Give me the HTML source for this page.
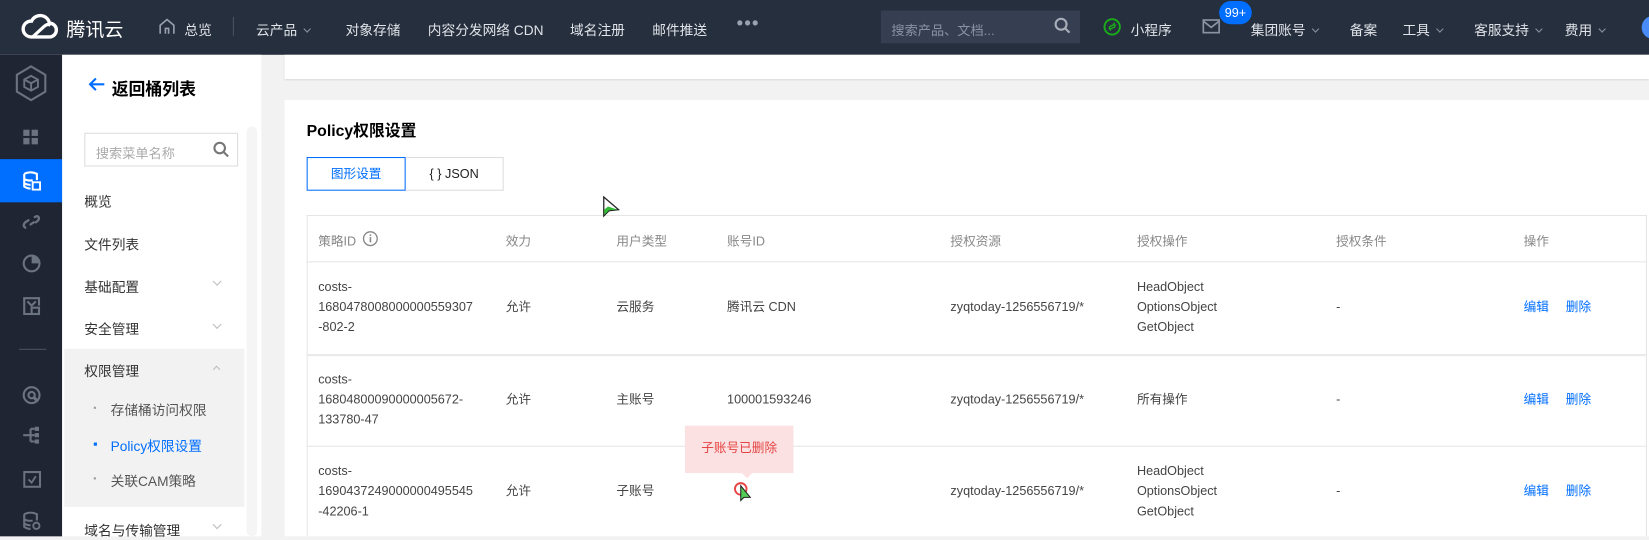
<!DOCTYPE html>
<html><head><meta charset="utf-8"><style>
*{margin:0;padding:0;box-sizing:border-box}
html,body{width:1649px;height:536px;overflow:hidden;background:#f2f2f2}
#w{position:absolute;left:0;top:0;width:1565px;height:509px;transform:scale(1.0537);transform-origin:0 0;font-family:"Liberation Sans","Noto Sans CJK SC",sans-serif;color:#444;font-size:12px}
.a{position:absolute;white-space:nowrap}
.hd{left:0;top:0;width:1565px;height:52px;background:#262f3e}
.hd .t{color:#e0e3e8;font-size:13px;top:18px}
.chev{display:inline-block;width:5px;height:5px;border-right:1px solid #8a93a3;border-bottom:1px solid #8a93a3;transform:rotate(45deg);margin-left:7px;vertical-align:3px}
.lb{left:0;top:52px;width:59px;height:457px;background:#1f2532}
.sb{left:59px;top:52px;width:189px;height:457px;background:#fff}
.mi{left:80px;font-size:13px;color:#333}
.sc{left:203px;font-size:0}
.sc:after{content:"";position:absolute;width:5px;height:5px;border-right:1px solid #bbb;border-bottom:1px solid #bbb;transform:rotate(45deg)}
.th{color:#888;top:220px}
.cell{line-height:19px;font-size:12px;color:#444}
.hl{position:absolute;left:291px;width:1271px;height:1px;background:#e5e5e5}
.ed{color:#006eff}
</style></head><body><div id="w">
<div class="a hd">
<svg class="a" style="left:20px;top:12px" width="36" height="26" viewBox="0 0 36 26"><path d="M9 23 H27 A6.5 6.5 0 0 0 27 10 A9 9 0 0 0 10 8 A7.5 7.5 0 0 0 9 23 Z" fill="none" stroke="#fff" stroke-width="3.2"/><path d="M11 23 L22 13 Q25 10 28 12" fill="none" stroke="#fff" stroke-width="3"/></svg>
<div class="a" style="left:63px;top:14px;color:#fff;font-size:18px">腾讯云</div>
<svg class="a" style="left:150px;top:17px" width="17" height="16" viewBox="0 0 17 16"><path d="M2 15 V7 L8.5 1.5 L15 7 V15 M7 15 V10 H10 V15" fill="none" stroke="#9aa2b1" stroke-width="1.5"/></svg>
<div class="a t" style="left:175px">总览</div>
<div class="a" style="left:221px;top:16px;width:1px;height:18px;background:#4a5366"></div>
<div class="a t" style="left:243px">云产品<span class="chev"></span></div>
<div class="a t" style="left:328px">对象存储</div>
<div class="a t" style="left:406px">内容分发网络 CDN</div>
<div class="a t" style="left:541px">域名注册</div>
<div class="a t" style="left:619px">邮件推送</div>
<div class="a t" style="left:699px;top:12px;font-size:18px;color:#9aa2b1;letter-spacing:1px">•••</div>
<div class="a" style="left:836px;top:10px;width:189px;height:31px;background:#363f52"></div>
<div class="a" style="left:846px;top:18px;color:#8a93a3;font-size:12.5px">搜索产品、文档...</div>
<svg class="a" style="left:1000px;top:16px" width="17" height="17" viewBox="0 0 17 17"><circle cx="7" cy="7" r="5.2" fill="none" stroke="#a8aeb8" stroke-width="2"/><path d="M11 11 L15 15" stroke="#a8aeb8" stroke-width="2"/></svg>
<svg class="a" style="left:1047px;top:17px" width="17" height="17" viewBox="0 0 17 17"><circle cx="8.5" cy="8.5" r="7.3" fill="none" stroke="#1aad19" stroke-width="1.8"/><path d="M6 11 Q5 8 8 7.5 L9 7 Q11 6 10 4.5 M11 6 Q12 9 9 9.5 Q6 10 7 12" fill="none" stroke="#1aad19" stroke-width="1.4"/></svg>
<div class="a t" style="left:1073px">小程序</div>
<svg class="a" style="left:1141px;top:18px" width="17" height="14" viewBox="0 0 17 14"><rect x="1" y="1" width="15" height="12" fill="none" stroke="#8a93a3" stroke-width="1.6"/><path d="M1 2 L8.5 8 L16 2" fill="none" stroke="#8a93a3" stroke-width="1.6"/></svg>
<div class="a" style="left:1157px;top:1px;width:31px;height:22px;border-radius:11px;background:#006eff;color:#fff;font-size:12px;text-align:center;line-height:22px">99+</div>
<div class="a t" style="left:1187px">集团账号<span class="chev"></span></div>
<div class="a t" style="left:1281px">备案</div>
<div class="a t" style="left:1331px">工具<span class="chev"></span></div>
<div class="a t" style="left:1399px">客服支持<span class="chev"></span></div>
<div class="a t" style="left:1485px">费用<span class="chev"></span></div>
<div class="a" style="left:1558px;top:15px;width:22px;height:22px;border-radius:11px;background:#4a8cf7"></div>
</div>
<div class="a lb"></div>
<svg class="a" style="left:13px;top:61px" width="33" height="36" viewBox="0 0 33 36"><path d="M16.5 2 L30 10 V26 L16.5 34 L3 26 V10 Z" fill="none" stroke="#6b7280" stroke-width="2"/><path d="M16.5 11 L23 14.5 V21.5 L16.5 25 L10 21.5 V14.5 Z M10 14.5 L16.5 18 L23 14.5 M16.5 18 V25" fill="none" stroke="#6b7280" stroke-width="1.8"/></svg>
<svg class="a" style="left:22px;top:123px" width="15" height="15"><rect x="0" y="0" width="6" height="6" fill="#6b7280"/><rect x="8" y="0" width="6" height="6" fill="#6b7280"/><rect x="0" y="8" width="6" height="6" fill="#6b7280"/><rect x="8" y="8" width="6" height="6" fill="#6b7280"/></svg>
<div class="a" style="left:0;top:151px;width:59px;height:41px;background:#006eff"></div>
<svg class="a" style="left:21px;top:162px" width="18" height="19" viewBox="0 0 18 19"><path d="M2 3 Q8 0 14 3 V9 M2 3 V15 Q5 17 8 17 M2 8 Q6 10 10 9 M2 12 Q5 13.5 8 13.5" fill="none" stroke="#fff" stroke-width="2"/><rect x="10" y="11" width="7" height="7" fill="none" stroke="#fff" stroke-width="1.8"/></svg>
<svg class="a" style="left:21px;top:203px" width="18" height="16" viewBox="0 0 18 16"><path d="M3 13 Q0 11 3 8 L6 6 M8 10 L11 8 M12 3 Q15 1 16 4 Q16 6 13 8" fill="none" stroke="#6b7280" stroke-width="2.2" stroke-linecap="round"/></svg>
<svg class="a" style="left:21px;top:240px" width="18" height="19" viewBox="0 0 18 19"><circle cx="9" cy="10" r="7.5" fill="none" stroke="#6b7280" stroke-width="2"/><path d="M9 10 V2.5 A7.5 7.5 0 0 1 16.5 10 Z" fill="#6b7280"/></svg>
<svg class="a" style="left:21px;top:281px" width="18" height="19" viewBox="0 0 18 19"><path d="M13 17 H2 V2 H16 V9 M5 5 L9 9 L13 5" fill="none" stroke="#6b7280" stroke-width="2"/><rect x="9" y="11" width="7" height="6" fill="none" stroke="#6b7280" stroke-width="2"/></svg>
<div class="a" style="left:18px;top:331px;width:26px;height:1px;background:#4a5366"></div>
<svg class="a" style="left:21px;top:366px" width="18" height="18" viewBox="0 0 18 18"><circle cx="9" cy="9" r="7.5" fill="none" stroke="#6b7280" stroke-width="2"/><circle cx="9" cy="9" r="3" fill="none" stroke="#6b7280" stroke-width="2"/><path d="M11 11 L15 15" stroke="#6b7280" stroke-width="3"/></svg>
<svg class="a" style="left:21px;top:404px" width="18" height="18" viewBox="0 0 18 18"><path d="M1 9 H8 M8 3 V15 M8 3 H12 M8 9 H12 M8 15 H12" fill="none" stroke="#6b7280" stroke-width="2"/><rect x="12" y="1" width="4" height="4" fill="#6b7280"/><rect x="12" y="7" width="4" height="4" fill="#6b7280"/><rect x="12" y="13" width="4" height="4" fill="#6b7280"/></svg>
<svg class="a" style="left:22px;top:446px" width="17" height="17" viewBox="0 0 17 17"><rect x="1" y="2" width="15" height="14" fill="none" stroke="#6b7280" stroke-width="2"/><path d="M5 9 L8 12 L12 6" fill="none" stroke="#6b7280" stroke-width="1.8"/></svg>
<svg class="a" style="left:21px;top:485px" width="18" height="19" viewBox="0 0 18 19"><path d="M2 3 Q8 0 14 3 V9 M2 3 V15 Q5 17 8 17 M2 8 Q6 10 10 9 M2 12 Q5 13.5 8 13.5" fill="none" stroke="#6b7280" stroke-width="2"/><circle cx="13.5" cy="14" r="3" fill="none" stroke="#6b7280" stroke-width="1.8"/></svg>

<div class="a sb"></div>
<div class="a" style="left:234px;top:120px;width:10px;height:389px;background:#f5f5f5;border-radius:5px"></div>
<svg class="a" style="left:84px;top:73px" width="16" height="14" viewBox="0 0 16 14"><path d="M15 7 H2 M7 1.5 L1.5 7 L7 12.5" fill="none" stroke="#006eff" stroke-width="2"/></svg>
<div class="a" style="left:106px;top:71px;font-size:16px;font-weight:bold;color:#000">返回桶列表</div>
<div class="a" style="left:80px;top:126px;width:146px;height:32px;border:1px solid #ddd;background:#fff"></div>
<div class="a" style="left:91px;top:135px;color:#aaa;font-size:12.5px">搜索菜单名称</div>
<svg class="a" style="left:202px;top:134px" width="16" height="16" viewBox="0 0 16 16"><circle cx="6.5" cy="6.5" r="5" fill="none" stroke="#777" stroke-width="2"/><path d="M10 10 L14.5 14.5" stroke="#777" stroke-width="2"/></svg>
<div class="a mi" style="top:181px">概览</div>
<div class="a mi" style="top:222px">文件列表</div>
<div class="a mi" style="top:262px">基础配置</div><div class="a sc" style="top:264px"></div>
<div class="a mi" style="top:302px">安全管理</div><div class="a sc" style="top:305px"></div>
<div class="a" style="left:61px;top:331px;width:171px;height:150px;background:#f2f2f2"></div>
<div class="a mi" style="top:342px">权限管理</div>
<div class="a" style="left:203px;top:348px;width:5px;height:5px;border-left:1px solid #bbb;border-top:1px solid #bbb;transform:rotate(45deg)"></div>
<div class="a" style="left:89px;top:386px;width:2px;height:2px;background:#999"></div>
<div class="a" style="left:105px;top:379px;font-size:13px;color:#555">存储桶访问权限</div>
<div class="a" style="left:89px;top:420px;width:3px;height:3px;background:#006eff"></div>
<div class="a" style="left:105px;top:413px;font-size:13px;color:#006eff">Policy权限设置</div>
<div class="a" style="left:89px;top:453px;width:2px;height:2px;background:#999"></div>
<div class="a" style="left:105px;top:446px;font-size:13px;color:#555">关联CAM策略</div>
<div class="a mi" style="top:493px">域名与传输管理</div><div class="a sc" style="top:495px"></div>

<div class="a" style="left:270px;top:52px;width:1295px;height:23px;background:#fff;box-shadow:0 1px 2px rgba(0,0,0,.15)"></div>
<div class="a" style="left:270px;top:95px;width:1295px;height:414px;background:#fff"></div>
<div class="a" style="left:291px;top:113px;font-size:15px;font-weight:bold;color:#000">Policy权限设置</div>
<div class="a" style="left:291px;top:149px;width:94px;height:32px;border:1px solid #006eff;color:#006eff;text-align:center;line-height:30px">图形设置</div>
<div class="a" style="left:385px;top:149px;width:93px;height:32px;border:1px solid #ddd;border-left:none;color:#222;text-align:center;line-height:30px">{ } JSON</div>

<div class="a" style="left:291px;top:204px;width:1272px;height:305px;border:1px solid #e5e5e5;border-bottom:none"></div>
<div class="hl" style="top:248px"></div><div class="hl" style="top:336px;height:2px;background:#eaeaea"></div><div class="hl" style="top:423px"></div>
<div class="a th" style="left:302px">策略ID</div>
<svg class="a" style="left:344px;top:219px" width="15" height="15" viewBox="0 0 15 15"><circle cx="7.5" cy="7.5" r="6.5" fill="none" stroke="#888" stroke-width="1.3"/><rect x="6.8" y="6" width="1.5" height="5" fill="#888"/><rect x="6.8" y="3.5" width="1.5" height="1.5" fill="#888"/></svg>
<div class="a th" style="left:480px">效力</div><div class="a th" style="left:585px">用户类型</div><div class="a th" style="left:690px">账号ID</div><div class="a th" style="left:902px">授权资源</div><div class="a th" style="left:1079px">授权操作</div><div class="a th" style="left:1268px">授权条件</div><div class="a th" style="left:1446px">操作</div>

<div class="a cell" style="left:302px;top:263px">costs-<br>1680478008000000559307<br>-802-2</div>
<div class="a cell" style="left:480px;top:282px">允许</div><div class="a cell" style="left:585px;top:282px">云服务</div><div class="a cell" style="left:690px;top:282px">腾讯云 CDN</div><div class="a cell" style="left:902px;top:282px">zyqtoday-1256556719/*</div>
<div class="a cell" style="left:1079px;top:263px">HeadObject<br>OptionsObject<br>GetObject</div>
<div class="a cell" style="left:1268px;top:282px">-</div><div class="a cell ed" style="left:1446px;top:282px">编辑</div><div class="a cell ed" style="left:1486px;top:282px">删除</div>

<div class="a cell" style="left:302px;top:351px">costs-<br>16804800090000005672-<br>133780-47</div>
<div class="a cell" style="left:480px;top:370px">允许</div><div class="a cell" style="left:585px;top:370px">主账号</div><div class="a cell" style="left:690px;top:370px">100001593246</div><div class="a cell" style="left:902px;top:370px">zyqtoday-1256556719/*</div>
<div class="a cell" style="left:1079px;top:370px">所有操作</div>
<div class="a cell" style="left:1268px;top:370px">-</div><div class="a cell ed" style="left:1446px;top:370px">编辑</div><div class="a cell ed" style="left:1486px;top:370px">删除</div>

<div class="a cell" style="left:302px;top:438px">costs-<br>1690437249000000495545<br>-42206-1</div>
<div class="a cell" style="left:480px;top:457px">允许</div><div class="a cell" style="left:585px;top:457px">子账号</div><div class="a cell" style="left:902px;top:457px">zyqtoday-1256556719/*</div>
<div class="a cell" style="left:1079px;top:438px">HeadObject<br>OptionsObject<br>GetObject</div>
<div class="a cell" style="left:1268px;top:457px">-</div><div class="a cell ed" style="left:1446px;top:457px">编辑</div><div class="a cell ed" style="left:1486px;top:457px">删除</div>

<div class="a" style="left:650px;top:404px;width:103px;height:45px;background:#fbe1e1;color:#e54545;font-size:12px;text-align:center;line-height:43px">子账号已删除</div>
<div class="a" style="left:704px;top:449px;width:0;height:0;border-left:5px solid transparent;border-right:5px solid transparent;border-top:5px solid #fbe1e1"></div>
<svg class="a" style="left:696px;top:457px" width="20" height="20" viewBox="0 0 20 20"><circle cx="7" cy="7" r="5.5" fill="none" stroke="#e54545" stroke-width="1.8"/><path d="M7 4 L7 18 L10 15 L16 15 Z" fill="#5c5" stroke="#222" stroke-width="1"/></svg>
<svg class="a" style="left:571px;top:185px" width="18" height="22" viewBox="0 0 18 22"><path d="M2 2 L2 20 L7 15 L16 14 Z" fill="#fff" stroke="#222" stroke-width="1.2"/><path d="M2.5 19 L7 14.5 L15 14 L6 11 L2.5 14 Z" fill="#3b3"/></svg>
</div></body></html>
